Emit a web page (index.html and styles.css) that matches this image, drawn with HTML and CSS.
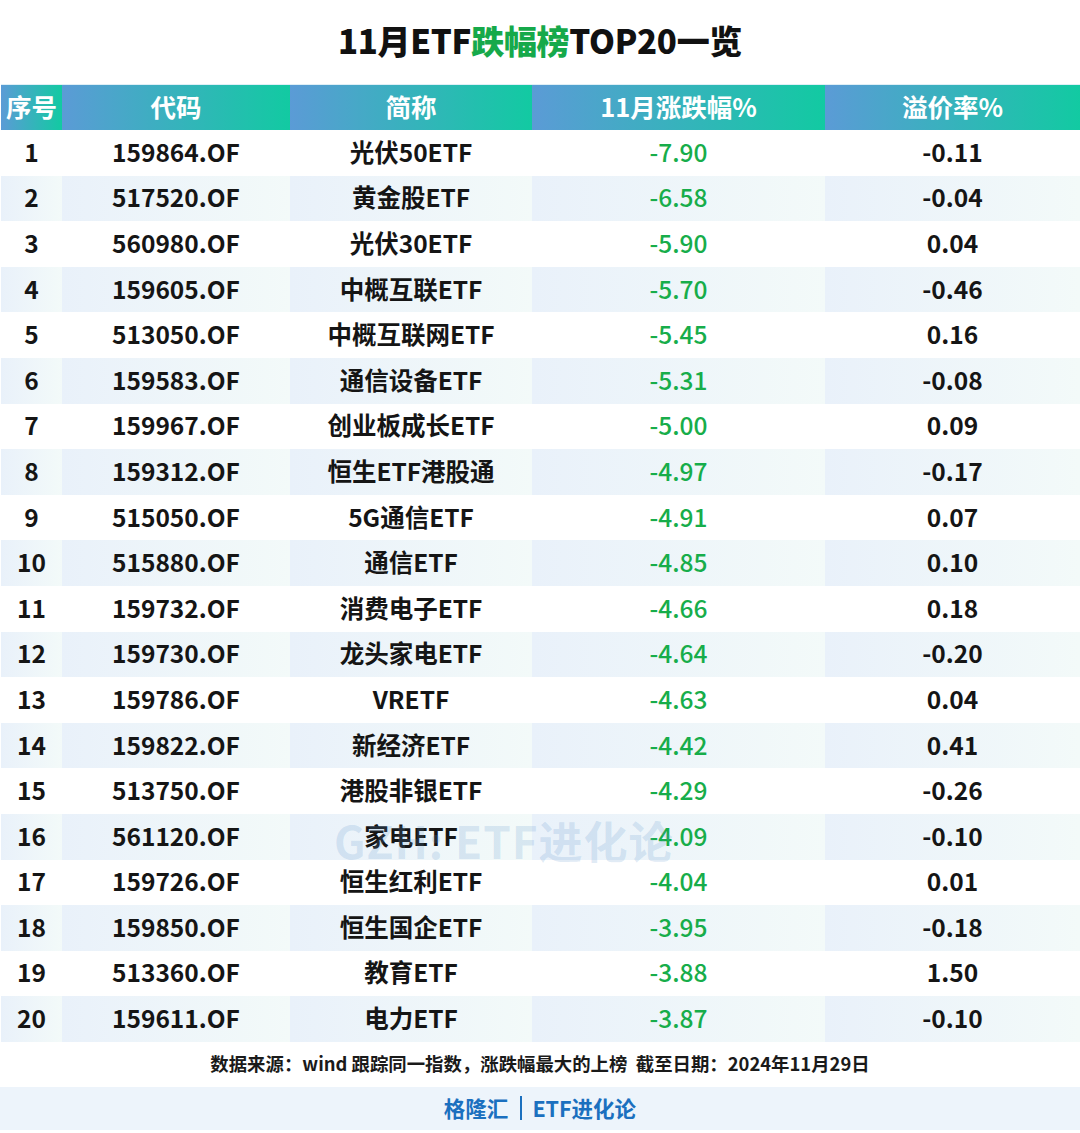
FILE: index.html
```html
<!DOCTYPE html>
<html lang="zh">
<head>
<meta charset="utf-8">
<link rel="stylesheet" href="styles.css">
</head>
<body>
<div class="page">
  <h1 class="title">11月ETF<span class="green">跌幅榜</span>TOP20一览</h1>
  <div class="table">
    <div class="head">
      <div class="hc">序号</div><div class="hc">代码</div><div class="hc">简称</div><div class="hc">11月涨跌幅%</div><div class="hc">溢价率%</div>
    </div>
    <div class="body" id="rows">
      <div class="row"><div>1</div><div>159864.OF</div><div>光伏50ETF</div><div class="g">-7.90</div><div>-0.11</div></div>
      <div class="row alt"><div>2</div><div>517520.OF</div><div>黄金股ETF</div><div class="g">-6.58</div><div>-0.04</div></div>
      <div class="row"><div>3</div><div>560980.OF</div><div>光伏30ETF</div><div class="g">-5.90</div><div>0.04</div></div>
      <div class="row alt"><div>4</div><div>159605.OF</div><div>中概互联ETF</div><div class="g">-5.70</div><div>-0.46</div></div>
      <div class="row"><div>5</div><div>513050.OF</div><div>中概互联网ETF</div><div class="g">-5.45</div><div>0.16</div></div>
      <div class="row alt"><div>6</div><div>159583.OF</div><div>通信设备ETF</div><div class="g">-5.31</div><div>-0.08</div></div>
      <div class="row"><div>7</div><div>159967.OF</div><div>创业板成长ETF</div><div class="g">-5.00</div><div>0.09</div></div>
      <div class="row alt"><div>8</div><div>159312.OF</div><div>恒生ETF港股通</div><div class="g">-4.97</div><div>-0.17</div></div>
      <div class="row"><div>9</div><div>515050.OF</div><div>5G通信ETF</div><div class="g">-4.91</div><div>0.07</div></div>
      <div class="row alt"><div>10</div><div>515880.OF</div><div>通信ETF</div><div class="g">-4.85</div><div>0.10</div></div>
      <div class="row"><div>11</div><div>159732.OF</div><div>消费电子ETF</div><div class="g">-4.66</div><div>0.18</div></div>
      <div class="row alt"><div>12</div><div>159730.OF</div><div>龙头家电ETF</div><div class="g">-4.64</div><div>-0.20</div></div>
      <div class="row"><div>13</div><div>159786.OF</div><div>VRETF</div><div class="g">-4.63</div><div>0.04</div></div>
      <div class="row alt"><div>14</div><div>159822.OF</div><div>新经济ETF</div><div class="g">-4.42</div><div>0.41</div></div>
      <div class="row"><div>15</div><div>513750.OF</div><div>港股非银ETF</div><div class="g">-4.29</div><div>-0.26</div></div>
      <div class="row alt"><div>16</div><div>561120.OF</div><div>家电ETF</div><div class="g">-4.09</div><div>-0.10</div></div>
      <div class="row"><div>17</div><div>159726.OF</div><div>恒生红利ETF</div><div class="g">-4.04</div><div>0.01</div></div>
      <div class="row alt"><div>18</div><div>159850.OF</div><div>恒生国企ETF</div><div class="g">-3.95</div><div>-0.18</div></div>
      <div class="row"><div>19</div><div>513360.OF</div><div>教育ETF</div><div class="g">-3.88</div><div>1.50</div></div>
      <div class="row alt"><div>20</div><div>159611.OF</div><div>电力ETF</div><div class="g">-3.87</div><div>-0.10</div></div>
      <div class="watermark">GZH: ETF进化论</div>
    </div>
  </div>
  <div class="note">数据来源：wind 跟踪同一指数，涨跌幅最大的上榜&nbsp;&nbsp;截至日期：2024年11月29日</div>
  <div class="brand">格隆汇<span class="sep"></span>ETF进化论</div>
</div>
</body>
</html>
```
FILE: styles.css
```css
* { box-sizing: border-box; margin: 0; padding: 0; }
body {
  margin: 0;
  background: #ffffff;
  font-family: "Noto Sans CJK SC", "Noto Sans", sans-serif;
  color: #111;
}
.page { width: 1080px; height: 1133px; position: relative; }
.title {
  height: 84px;
  padding-bottom: 5px;
  display: flex;
  align-items: center;
  justify-content: center;
  font-size: 33px;
  font-weight: 900;
  color: #111;
  letter-spacing: -0.3px;
}
.green { color: #16a94a; }
.table { width: 1080px; padding-left: 1px; }
.head, .row {
  display: grid;
  grid-template-columns: 61px 228px 242px 293px 1fr;
}
.head { height: 46px; border-top: 1px solid #dfeff6; }
.hc {
  background: linear-gradient(to right, #5b9bd6, #12caa2);
  color: #fff;
  font-size: 25.5px;
  font-weight: 700;
  display: flex;
  align-items: center;
  justify-content: center;
  padding-bottom: 5px;
}
.body { position: relative; }
.row { height: 45.6px; }
.row > div {
  display: flex;
  align-items: center;
  justify-content: center;
  font-size: 24.5px;
  font-weight: 600;
  color: #151515;
  padding-bottom: 3px;
}
.row.alt > div { background: linear-gradient(to right, #e9f1fa, #f3faf9); }
.row > div.g { color: #17ad4a; font-weight: 500; }
.watermark {
  position: absolute;
  left: 333px;
  top: 678px;
  font-size: 44px;
  font-weight: 700;
  color: rgba(96, 150, 205, 0.2);
  letter-spacing: 1px;
  pointer-events: none;
}
.note {
  height: 45px;
  padding-bottom: 2px;
  display: flex;
  align-items: center;
  justify-content: center;
  font-size: 18.4px;
  font-weight: 700;
  color: #1a1a1a;
}
.brand {
  height: 43px;
  padding-bottom: 2px;
  background: #edf4fb;
  display: flex;
  align-items: center;
  justify-content: center;
  font-size: 21.5px;
  font-weight: 700;
  color: #1b70bf;
}
.sep {
  display: inline-block;
  width: 2px;
  height: 24px;
  background: #1b70bf;
  margin: 2px 10px 0 12px;
}
```
